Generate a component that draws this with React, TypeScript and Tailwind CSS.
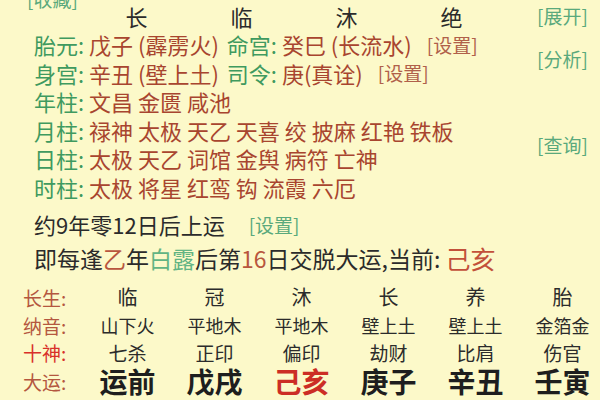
const green = "text-[#3f9a5f]";
const red = "text-[#a8452f]";

const shensha: { label: string; items: string }[] = [
  { label: "年柱:", items: "文昌 金匮 咸池" },
  { label: "月柱:", items: "禄神 太极 天乙 天喜 绞 披麻 红艳 铁板" },
  { label: "日柱:", items: "太极 天乙 词馆 金舆 病符 亡神" },
  { label: "时柱:", items: "太极 将星 红鸾 钩 流霞 六厄" },
];

const changsheng = ["临", "冠", "沐", "长", "养", "胎"];
const nayin = ["山下火", "平地木", "平地木", "壁上土", "壁上土", "金箔金"];
const shishen = ["七杀", "正印", "偏印", "劫财", "比肩", "伤官"];
const dayun = ["运前", "戊戌", "己亥", "庚子", "辛丑", "壬寅"];

export default function App() {
  return (
    <div className="w-[600px] h-[400px] overflow-hidden bg-[#fcf9c9] font-['Noto_Sans_CJK_SC','Noto_Sans',sans-serif] text-[#2b2b2b]">
      {/* cut-off top link */}
      <div className="-mt-[11px] h-[19px] flex items-center pl-[27px] text-[19px] leading-none text-[#5aa97c]">
        [收藏]
      </div>

      {/* pillars block */}
      <div className="grid grid-cols-[537px_63px] grid-rows-[22px_repeat(6,28.5px)] text-[22px] leading-none">
        <div className="col-start-1 row-start-1 flex items-start pl-[84px]">
          {["长", "临", "沐", "绝"].map((c) => (
            <span key={c} className="w-[105px] text-center leading-[16px]">
              {c}
            </span>
          ))}
        </div>
        <div className="col-start-2 row-start-1 text-[19px] leading-[16px] text-[#5aa97c]">[展开]</div>

        <div className="col-start-1 row-start-2 flex items-center pl-[34px] whitespace-pre">
          <span className={green}>胎元: </span>
          <span className={red}>戊子 (霹雳火)</span>
          <span className={`${green} ml-[8px]`}>命宫: </span>
          <span className={red}>癸巳 (长流水)</span>
          <span className="ml-[15px] text-[19px] text-[#b0604a]">[设置]</span>
        </div>
        <div className="col-start-1 row-start-3 flex items-center pl-[34px] whitespace-pre">
          <span className={green}>身宫: </span>
          <span className={red}>辛丑 (壁上土)</span>
          <span className={`${green} ml-[8px]`}>司令: </span>
          <span className={red}>庚(真诠)</span>
          <span className="ml-[15px] text-[19px] text-[#b0604a]">[设置]</span>
        </div>
        <div className="col-start-2 row-start-2 row-span-2 self-center text-[19px] text-[#5aa97c]">[分析]</div>

        {shensha.map((r, i) => (
          <div
            key={r.label}
            className={`col-start-1 flex items-center pl-[34px] whitespace-pre ${
              ["row-start-4", "row-start-5", "row-start-6", "row-start-7"][i]
            }`}
          >
            <span className={green}>{r.label} </span>
            <span className={red}>{r.items}</span>
          </div>
        ))}
        <div className="col-start-2 row-start-5 row-span-2 self-center text-[19px] text-[#5aa97c]">[查询]</div>
      </div>

      {/* start of luck */}
      <div className="mt-[6px] h-[34px] flex items-center pl-[34px] whitespace-pre leading-none">
        <span className="text-[22px]">约9年零12日后上运</span>
        <span className="ml-[24px] text-[19px] text-[#5aa97c]">[设置]</span>
      </div>
      <div className="h-[34px] flex items-center pl-[34px] text-[23px] whitespace-pre leading-none">
        <span>即每逢</span>
        <span className="text-[#b8563e]">乙</span>
        <span>年</span>
        <span className="text-[#62b483]">白露</span>
        <span>后第</span>
        <span className="text-[#b8563e]">16</span>
        <span>日交脱大运,当前: </span>
        <span className="text-[25px] text-[#c2503a]">己亥</span>
      </div>

      {/* luck table */}
      <div className="mt-[8px] grid grid-cols-[84px_repeat(6,87px)] grid-rows-[28px_28px_27px_30px] items-center leading-none">
        <span className="pl-[23px] text-[19px] text-[#b4573f]">长生:</span>
        {changsheng.map((c, i) => (
          <span key={i} className="text-center text-[20px]">{c}</span>
        ))}
        <span className="pl-[23px] text-[19px] text-[#b4573f]">纳音:</span>
        {nayin.map((c, i) => (
          <span key={i} className="text-center text-[18px]">{c}</span>
        ))}
        <span className="pl-[23px] text-[19px] text-[#d8302a]">十神:</span>
        {shishen.map((c, i) => (
          <span key={i} className="text-center text-[19px]">{c}</span>
        ))}
        <span className="pl-[23px] text-[19px] text-[#b4573f]">大运:</span>
        {dayun.map((c, i) => (
          <span
            key={i}
            className={`text-center text-[28px] font-bold ${i === 2 ? "text-[#cc2e25]" : "text-[#1e1e1e]"}`}
          >
            {c}
          </span>
        ))}
      </div>
    </div>
  );
}
